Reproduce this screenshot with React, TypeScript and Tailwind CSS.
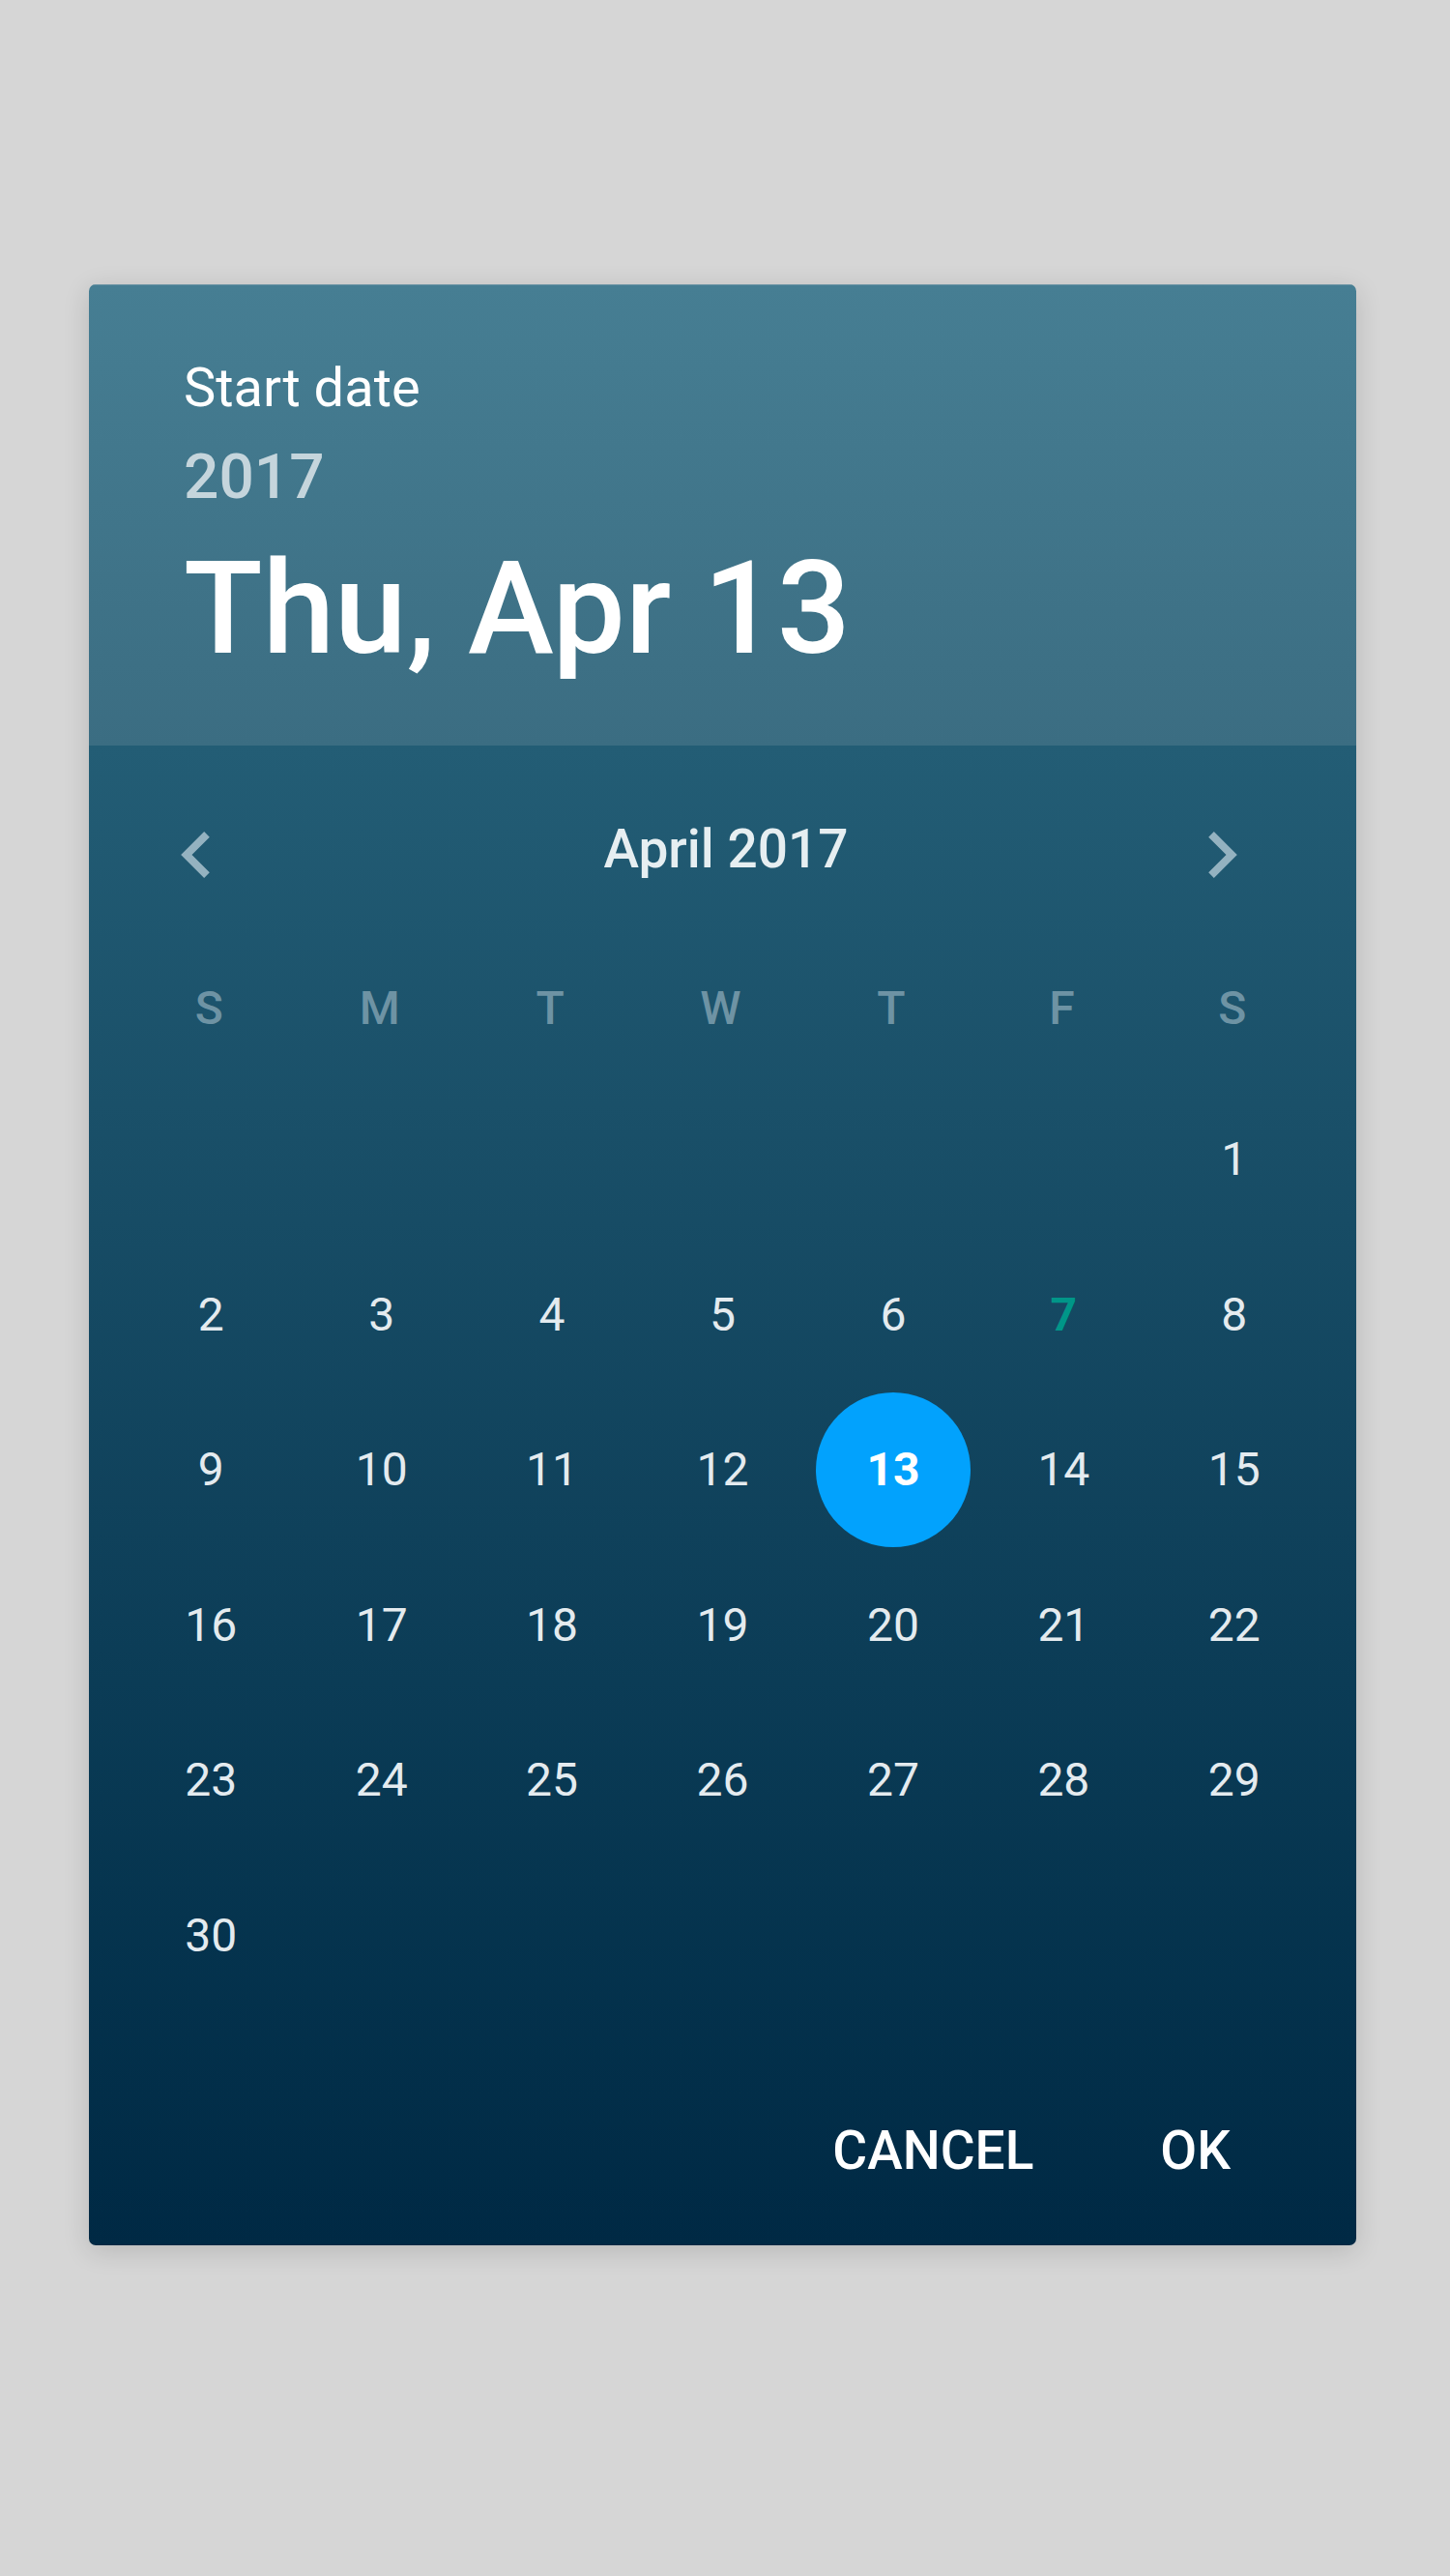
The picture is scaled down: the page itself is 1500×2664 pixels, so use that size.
import React from 'react';

// Días de la semana y celdas del mes (abril 2017 empieza en sábado)
const diasSemana = ['S', 'M', 'T', 'W', 'T', 'F', 'S'];
const offset = 6;
const totalDias = 30;
const hoy = 7;
const seleccionado = 13;

const Chevron = ({ dir }: { dir: 'left' | 'right' }) => (
    <svg width="30" height="48" viewBox="8 6 7.41 12" className="text-[#94b2c0]" fill="currentColor">
        {dir === 'left' ? (
            <path d="M15.41 7.41L14 6l-6 6 6 6 1.41-1.41L10.83 12z" />
        ) : (
            <path d="M8 7.41L9.41 6l6 6-6 6L8 16.59 12.58 12z" />
        )}
    </svg>
);

const DayCell = ({ day }: { day: number | null }) => {
    if (day === null) return <div className="h-[160.5px]" />;
    if (day === seleccionado) {
        return (
            <div className="h-[160.5px] flex items-center justify-center">
                <div className="w-[160px] h-[160px] rounded-full bg-[#02a2fd] flex items-center justify-center">
                    <span className="text-[48px] leading-none font-bold text-white">{day}</span>
                </div>
            </div>
        );
    }
    return (
        <div className="h-[160.5px] flex items-center justify-center">
            <span
                className={
                    day === hoy
                        ? 'text-[48px] leading-none font-bold text-[#009688]'
                        : 'text-[48px] leading-none text-[#e4ebef]'
                }
            >
                {day}
            </span>
        </div>
    );
};

const App = () => {
    const celdas: (number | null)[] = [
        ...Array.from({ length: offset }, () => null),
        ...Array.from({ length: totalDias }, (_, i) => i + 1),
    ];

    return (
        <div className="min-h-[2664px] w-[1500px] bg-[#d6d6d6] pt-[294px] font-['Roboto',sans-serif]">
            <div className="ml-[92px] w-[1311px] rounded-[7px] overflow-hidden shadow-[0_6px_28px_rgba(0,0,0,0.14)]">
                {/* Cabecera */}
                <div className="h-[477px] pt-[78px] pl-[98px] bg-gradient-to-b from-[#467e93] to-[#3b6d82] border-t border-[#8fb0bd]/60">
                    <div className="text-[56px] leading-none text-white">Start date</div>
                    <div className="mt-[33px] text-[64px] leading-none font-medium text-[#c5d5dc]">2017</div>
                    <div className="mt-[37px] text-[134px] leading-none font-medium text-white">Thu, Apr 13</div>
                </div>

                {/* Calendario */}
                <div className="bg-gradient-to-b from-[#235d75] to-[#002944] pt-[49px] pb-[48px]">
                    <div className="h-[128px] grid grid-cols-[1fr_auto_1fr] items-center">
                        <div className="pl-[95px] flex">
                            <Chevron dir="left" />
                        </div>
                        <div className="pl-[7px] mb-[12px] text-[55px] leading-none font-medium text-[#e6eef1]">
                            April 2017
                        </div>
                        <div className="pr-[123px] flex justify-end">
                            <Chevron dir="right" />
                        </div>
                    </div>

                    <div className="px-[38px]">
                        <div className="mt-[55px] grid grid-cols-7 h-[80px] items-center">
                            {diasSemana.map((d, i) => (
                                <div key={i} className="text-center text-[48px] leading-none font-medium text-[#6e93a4] -translate-x-[2px]">
                                    {d}
                                </div>
                            ))}
                        </div>
                        <div className="mt-[36px] grid grid-cols-7">
                            {celdas.map((d, i) => (
                                <DayCell key={i} day={d} />
                            ))}
                        </div>
                    </div>

                    <div className="mt-[92px] h-[100px] flex items-center justify-end gap-[131px] pr-[130px]">
                        <span className="text-[55px] leading-none font-medium text-white">CANCEL</span>
                        <span className="text-[55px] leading-none font-medium text-white">OK</span>
                    </div>
                </div>
            </div>
        </div>
    );
};

export default App;
